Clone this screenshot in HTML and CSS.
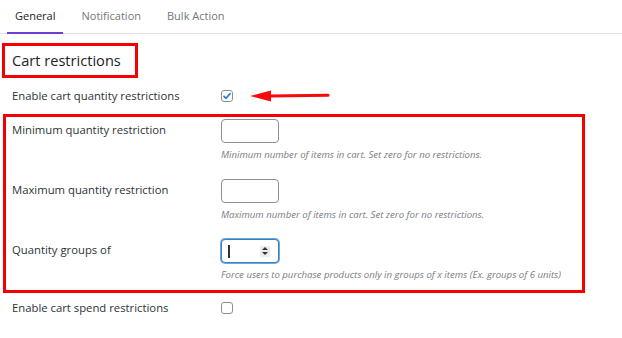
FILE: index.html
```html
<!DOCTYPE html>
<html>
<head>
<meta charset="utf-8">
<link rel="stylesheet" href="styles.css">
</head>
<body>
<div class="page">
  <nav class="tabs">
    <span class="tab active">General</span>
    <span class="tab">Notification</span>
    <span class="tab">Bulk Action</span>
  </nav>

  <h2 class="section-title">Cart restrictions</h2>

  <div class="row row-check">
    <span class="label">Enable cart quantity restrictions</span>
    <span class="checkbox checked">
      <svg viewBox="0 0 12 12" width="12" height="12"><path d="M3 6.3 L5.1 8.3 L9 3.6" fill="none" stroke="#2f7bd4" stroke-width="1.7" stroke-linecap="round" stroke-linejoin="round"/></svg>
    </span>
    <svg class="arrow" width="82" height="14" viewBox="0 0 82 14"><path d="M20 7 L78 6.3" stroke="#f60b0b" stroke-width="3" stroke-linecap="round"/><polygon points="0,7 21,1.5 21,12.5" fill="#f60b0b"/></svg>
  </div>

  <div class="highlight">
    <div class="row row-field">
      <span class="label">Minimum quantity restriction</span>
      <div class="field">
        <span class="num"></span>
        <p class="desc">Minimum number of items in cart. Set zero for no restrictions.</p>
      </div>
    </div>
    <div class="row row-field">
      <span class="label">Maximum quantity restriction</span>
      <div class="field">
        <span class="num"></span>
        <p class="desc">Maximum number of items in cart. Set zero for no restrictions.</p>
      </div>
    </div>
    <div class="row row-field">
      <span class="label">Quantity groups of</span>
      <div class="field">
        <span class="num focus"><span class="caret"></span><span class="spin"><i class="up"></i><i class="down"></i></span></span>
        <p class="desc">Force users to purchase products only in groups of x items (Ex. groups of 6 units)</p>
      </div>
    </div>
  </div>

  <div class="row row-check row-last">
    <span class="label">Enable cart spend restrictions</span>
    <span class="checkbox"></span>
  </div>
</div>
</body>
</html>
```

FILE: styles.css
```css
* { box-sizing: border-box; }
html, body { margin: 0; padding: 0; background: #fff; }
body {
  font-family: "Open Sans", "Noto Sans", sans-serif;
  font-size: 11.3px;
  color: #2c3338;
  width: 622px;
  height: 338px;
  overflow: hidden;
}
.page { position: relative; }

.tabs {
  display: flex;
  height: 34px;
  border-bottom: 1px solid #e2e2e2;
  padding-left: 7px;
  gap: 10px;
}
.tab {
  display: block;
  padding: 8px 8px 0;
  line-height: 16px;
  font-size: 11px;
  color: #72777c;
  font-weight: 500;
}
.tab.active {
  color: #1d2327;
  border-bottom: 2px solid #6d3fd0;
  margin-bottom: -1px;
}

.section-title {
  display: block;
  width: 136px;
  height: 35px;
  margin: 9px 0 12px 2px;
  border: 3px solid #f40000;
  padding: 0 0 0 7px;
  font-size: 14.6px;
  font-weight: 500;
  line-height: 29px;
  color: #1d2327;
}

.row {
  display: grid;
  grid-template-columns: 209px 1fr;
  padding-left: 12px;
}
.label { color: #2c3338; }

.row-check {
  position: relative;
  height: 12px;
  align-items: center;
  line-height: 12px;
  margin-bottom: 12px;
}
.row-last { margin-top: 9px; }

.checkbox {
  display: block;
  width: 12px;
  height: 12px;
  border: 1px solid #8c8f94;
  border-radius: 3px;
  background: #fff;
}
.checkbox svg { display: block; margin: -1px; }

.arrow {
  position: absolute;
  left: 250px;
  top: -1px;
}

.highlight {
  width: 582px;
  margin-left: 3px;
  border: 3px solid #f40000;
  padding: 2px 0 9px 0;
}
.highlight .row { padding-left: 6px; }
.row-field + .row-field { margin-top: 18px; }
.row-field .label { line-height: 22px; }

.field { display: flex; flex-direction: column; }
.num {
  position: relative;
  display: block;
  width: 58px;
  height: 24px;
  border: 1px solid #8c8f94;
  border-radius: 4px;
  background: #fff;
}
.num.focus {
  border: 1px solid #3582c4;
  box-shadow: 0 0 0 1px #6fa6db;
}
.caret {
  position: absolute;
  left: 6px;
  top: 5px;
  width: 2px;
  height: 13px;
  background: #2c3338;
}
.spin {
  position: absolute;
  left: 38px;
  top: 6px;
  width: 10px;
  height: 11px;
  background: #ececec;
}
.spin i {
  position: absolute;
  left: 2px;
  width: 0;
  height: 0;
  border-left: 3px solid transparent;
  border-right: 3px solid transparent;
}
.spin .up { top: 1px; border-bottom: 3.5px solid #333; }
.spin .down { top: 6px; border-top: 3.5px solid #333; }

.desc {
  margin: 6px 0 0;
  font-size: 9.6px;
  line-height: 12px;
  font-style: italic;
  color: #787c82;
}
```
